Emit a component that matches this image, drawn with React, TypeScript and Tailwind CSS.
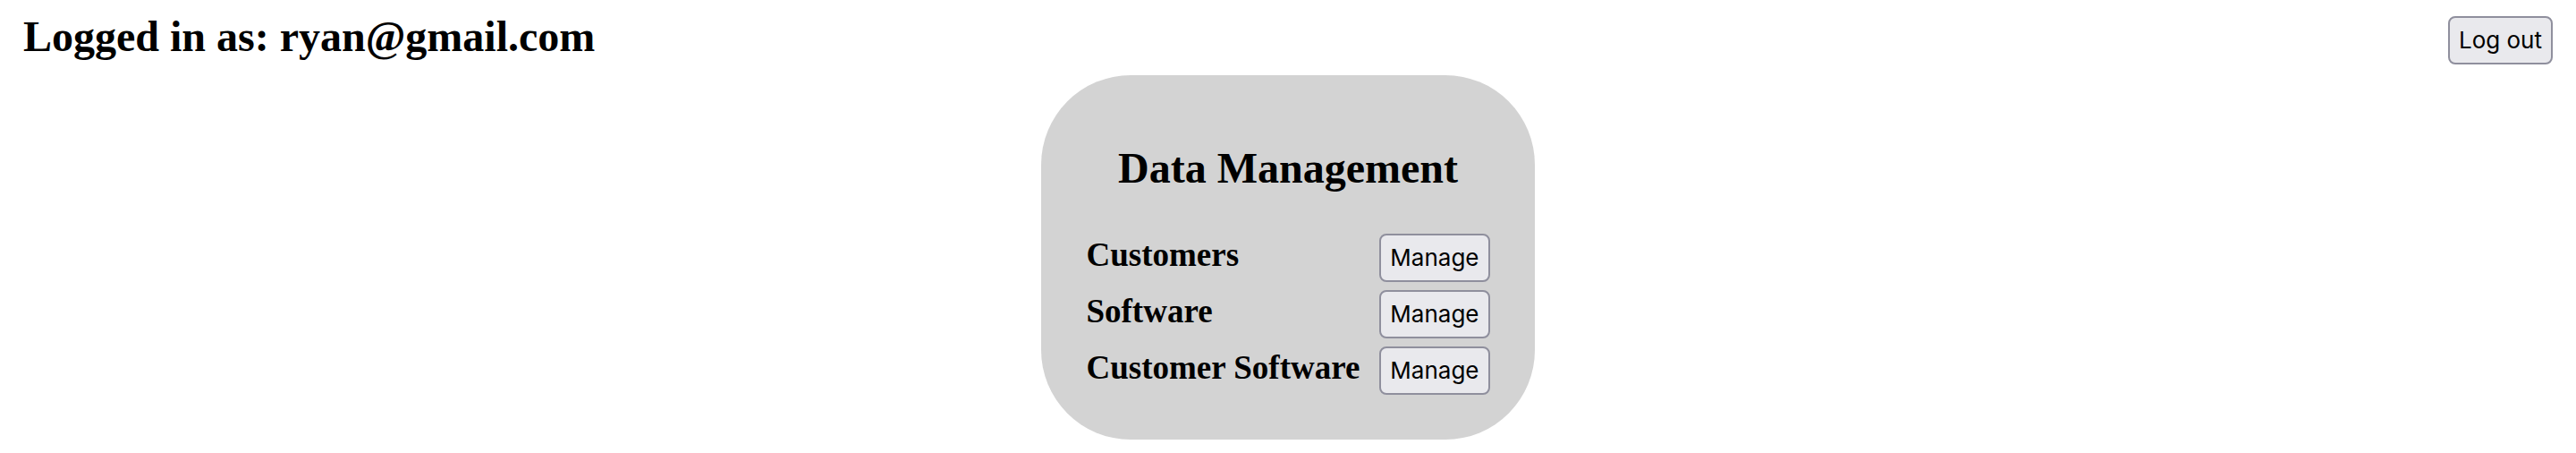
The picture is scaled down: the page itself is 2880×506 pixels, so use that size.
const rows = ["Customers", "Software", "Customer Software"];

const buttonStyle =
  "h-[54px] shrink-0 rounded-lg border-2 border-[#8f8f9d] bg-[#e9e9ed] px-2.5 font-[Inter,sans-serif] text-[26px] leading-8 text-black";

export default function App() {
  return (
    <div className="bg-white font-['Liberation_Serif',serif] text-black">
      <header className="flex items-start justify-between px-[26px] pt-[18px]">
        <h1 className="text-[48px] font-bold leading-[46px]">Logged in as: ryan@gmail.com</h1>
        <button type="button" className={buttonStyle}>Log out</button>
      </header>
      <main className="flex justify-center pt-3">
        <section className="flex flex-col items-center rounded-[100px] bg-[#d3d3d3] px-[50px] pb-[50px] pt-[77px]">
          <h2 className="text-[48px] font-bold leading-[54px]">Data Management</h2>
          <ul className="mt-[46px] flex w-full flex-col gap-[9px]">
            {rows.map((name) => (
              <li key={name} className="flex items-start justify-between gap-[22px]">
                <h3 id={name.replace(" ", "-")} className="whitespace-nowrap text-[37px] font-bold leading-[48px]">{name}</h3>
                <button type="button" aria-describedby={name.replace(" ", "-")} className={buttonStyle}>Manage</button>
              </li>
            ))}
          </ul>
        </section>
      </main>
    </div>
  );
}
